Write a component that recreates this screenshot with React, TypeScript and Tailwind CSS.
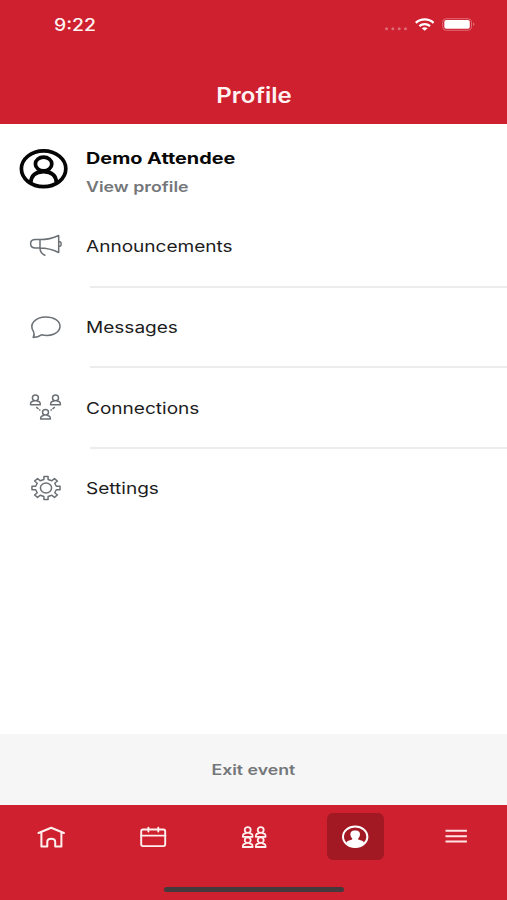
import type { ReactNode } from 'react';

const AvatarIcon = () => (
  <svg width="50" height="42" viewBox="19 148 50 42" fill="none" stroke="#050505" strokeWidth="3.7">
    <ellipse cx="43.6" cy="168.8" rx="22.2" ry="17.9" />
    <ellipse cx="43.6" cy="164" rx="8.2" ry="6.9" />
    <path d="M30.6 183.5C30.9 176 35.2 171.7 43.6 171.7S56.3 176 56.6 183.5" />
  </svg>
);

const MegaphoneIcon = () => (
  <svg width="36" height="26" viewBox="28 234 36 26" fill="none" stroke="#6b7075" strokeWidth="1.5" strokeLinejoin="round" strokeLinecap="round">
    <path d="M40 240.6H35.5C32 240.6 30.6 242.3 30.6 244.8S32 249 35.5 249H40M40 240.6C47 240.6 53 239.2 58.7 236.5V253.5C53 250.7 47 249 40 249ZM40 249C40 253 41.7 254.8 44.9 256.3M58.7 242.8H60C61.6 243.2 61.6 246.8 60 247.2H58.7" />
  </svg>
);

const MessageIcon = () => (
  <svg width="36" height="28" viewBox="28 313 36 28" fill="none" stroke="#6b7075" strokeWidth="1.5" strokeLinejoin="round">
    <path d="M33.2 337.4C34.4 335.3 34.5 333.5 33.5 331.5C28.5 324.3 35.5 317 45.8 317C54 317 60 320.8 60 326.2C60 333.2 50.5 337 41.5 334.8C39.5 336.2 36.5 337.3 33.2 337.4Z" />
  </svg>
);

const Person = ({ x, y }: { x: number; y: number }) => (
  <g transform={`translate(${x} ${y})`}>
    <ellipse cx="5.4" cy="3.4" rx="3" ry="2.8" />
    <path d="M3.7 5.7V6.5L1.5 7.3C.6 7.7.5 8.7.5 10.2H10.3C10.3 8.7 10.2 7.7 9.3 7.3L7.1 6.5V5.7" />
  </g>
);

const ConnectionsIcon = () => (
  <svg width="36" height="30" viewBox="28 393.5 36 30" fill="none" stroke="#6b7075" strokeWidth="1.5" strokeLinejoin="round">
    <Person x={30} y={395} />
    <Person x={50.1} y={395} />
    <Person x={40.1} y={409.4} />
    <path d="M36.2 407.6L40.4 411M54.8 407.6L50.6 411" strokeDasharray="3 0.8" />
  </svg>
);

// Eight square teeth around an ellipse
const gearPoints = Array.from({ length: 8 }, (_, i) =>
  [[-11.5, 0.74], [-8.5, 1], [8.5, 1], [11.5, 0.74]].map(([offset, r]) => {
    const angle = ((i * 45 + offset) * Math.PI) / 180;
    return `${(14.2 * r * Math.cos(angle)).toFixed(2)},${(11.7 * r * Math.sin(angle)).toFixed(2)}`;
  }).join(' ')
).join(' ');

const SettingsIcon = () => (
  <svg width="36" height="30" viewBox="-18 -15 36 30" fill="none" stroke="#6b7075" strokeWidth="1.5" strokeLinejoin="round">
    <polygon points={gearPoints} />
    <ellipse rx="5.6" ry="4.9" />
  </svg>
);

const HomeIcon = () => (
  <svg width="30" height="24" viewBox="36.5 825 30 24" fill="none" stroke="#fff0f0" strokeWidth="2" strokeLinecap="round" strokeLinejoin="round">
    <path d="M38 833L50.7 827.8L63.4 833M40.9 832.5V846.5H46.8V841.8C46.8 837.6 54.7 837.6 54.7 841.8V846.5H60.9V832.5" />
  </svg>
);

const CalendarIcon = () => (
  <svg width="30" height="24" viewBox="138 825 30 24" fill="none" stroke="#fff0f0" strokeWidth="1.9">
    <rect x="141.2" y="829.5" width="24" height="16.6" rx="1.8" />
    <path d="M141 835.6H165.4M148.4 827.6V831.6M158.3 827.6V831.6" strokeLinecap="round" />
  </svg>
);

const PeopleIcon = () => (
  <svg width="30" height="24" viewBox="239 825 30 24" fill="none" stroke="#fff0f0" strokeWidth="1.8" strokeLinejoin="round">
    <Person x={242.3} y={826.6} />
    <Person x={255.3} y={826.6} />
    <Person x={242.3} y={836.8} />
    <Person x={255.3} y={836.8} />
  </svg>
);

const ProfileIcon = () => (
  <svg width="30" height="24" viewBox="340 825 30 24" fill="none">
    <ellipse cx="355.2" cy="836.8" rx="12.2" ry="10.2" stroke="#fff" strokeWidth="2" />
    <path d="M355.2 830.6C351.5 830.6 350 832.6 350.5 835.2C350.7 836.7 351.4 837.6 352.2 838.3V839.4L348.3 840.8C346.8 841.4 346.4 842.5 346.2 844C348.3 846.3 351.4 847.4 355.2 847.4S362.1 846.3 364.2 844C364 842.5 363.6 841.4 362.1 840.8L358.2 839.4V838.3C359 837.6 359.7 836.7 359.9 835.2C360.4 832.6 358.9 830.6 355.2 830.6Z" fill="#fff" />
  </svg>
);

const MenuIcon = () => (
  <svg width="30" height="24" viewBox="441.5 825 30 24" stroke="#ffe4e5" strokeWidth="2">
    <path d="M446 830.8H467.4M446 836.2H467.4M446 841.6H467.4" />
  </svg>
);

const menuItems = [
  { label: 'Announcements', icon: MegaphoneIcon },
  { label: 'Messages', icon: MessageIcon },
  { label: 'Connections', icon: ConnectionsIcon },
  { label: 'Settings', icon: SettingsIcon },
];

const tabs = [
  { id: 'home', icon: HomeIcon },
  { id: 'schedule', icon: CalendarIcon },
  { id: 'people', icon: PeopleIcon },
  { id: 'profile', icon: ProfileIcon },
  { id: 'menu', icon: MenuIcon },
];

// Wide lettering used for every label
const Wide = ({ children, className = 'scale-x-[1.22]' }: { children: ReactNode; className?: string }) => (
  <span className={`inline-block whitespace-nowrap ${className}`}>{children}</span>
);

export default function App() {
  const activeTab = 'profile';

  return (
    <div className="flex h-[900px] w-[507px] flex-col overflow-hidden bg-white font-['Inter','Liberation_Sans',sans-serif]">
      {/* Header */}
      <header className="h-[124px] shrink-0 bg-[#ce202f] text-[#fff2f2]">
        <div className="flex h-[48px] items-center justify-between pr-[32px] pl-[54px]">
          <Wide className="origin-left scale-x-[1.14] pt-[3px] text-[17px] font-medium">9:22</Wide>
          <svg width="92" height="20" viewBox="383 14 92 20" fill="none">
            <g fill="#e06a75">
              <circle cx="386.6" cy="28.7" r="1.5" />
              <circle cx="392.9" cy="28.7" r="1.5" />
              <circle cx="399.2" cy="28.7" r="1.5" />
              <circle cx="405.5" cy="28.7" r="1.5" />
            </g>
            <g stroke="#fff" strokeWidth="2.2">
              <path d="M415.8 22.9C420.8 18.3 428.6 18.3 433.6 22.9" />
              <path d="M419.4 26.1C422.4 23.4 427 23.4 430 26.1" />
            </g>
            <path d="M421.8 28.2C423.5 26.8 425.9 26.8 427.6 28.2L424.7 30.7Z" fill="#fff" />
            <rect x="442.7" y="18.7" width="28.8" height="11.6" rx="3.5" stroke="#e06a75" />
            <rect x="444.3" y="20" width="25.5" height="8.8" rx="2" fill="#fff" />
            <path d="M473 22.5C475 23.2 475 25.4 473 26.1Z" fill="#e06a75" />
          </svg>
        </div>
        <h1 className="flex h-[94px] items-center justify-center text-[21px] leading-none font-semibold">
          <Wide className="scale-x-[1.145]">Profile</Wide>
        </h1>
      </header>

      {/* Profile */}
      <section className="flex h-[83px] shrink-0 pl-[19px]">
        <div className="w-[67px] pt-[24px]">
          <AvatarIcon />
        </div>
        <div className="flex flex-col items-start pt-[22px]">
          <Wide className="origin-left scale-x-[1.24] text-[16px] leading-6 font-bold text-[#080808]">Demo Attendee</Wide>
          <Wide className="mt-[5px] origin-left scale-x-[1.225] text-[14.5px] leading-6 font-semibold text-[#74777a]">View profile</Wide>
        </div>
      </section>

      {/* Menu */}
      <nav className="flex-1">
        {menuItems.map(({ label, icon: Icon }, i) => (
          <div key={label} className="flex h-[80.7px] flex-col">
            <div className="flex flex-1 items-center pl-[28px]">
              <div className="w-[58px]">
                <Icon />
              </div>
              <Wide className="origin-left scale-x-[1.19] text-[16px] text-[#1c1c1c]">{label}</Wide>
            </div>
            <div className={`ml-[90px] h-[2px] shrink-0 ${i < menuItems.length - 1 ? 'bg-[#ebeced]' : ''}`} />
          </div>
        ))}
      </nav>

      <button className="h-[71px] shrink-0 bg-[#f6f6f7] text-[14.5px] font-semibold text-[#74777a]">
        <Wide>Exit event</Wide>
      </button>

      {/* Tab bar */}
      <footer className="h-[95px] shrink-0 bg-[#ce202f] pt-[8px] pl-px">
        <div className="grid grid-cols-5">
          {tabs.map(({ id, icon: Icon }) => (
            <div key={id} className="flex justify-center">
              <button className={`flex h-[47px] w-[57px] items-center justify-center rounded-md ${id === activeTab ? 'bg-[#a21924]' : ''}`}>
                <Icon />
              </button>
            </div>
          ))}
        </div>
        <div className="mx-auto mt-[27px] h-[5px] w-[180px] rounded-full bg-[#443a3d]" />
      </footer>
    </div>
  );
}
